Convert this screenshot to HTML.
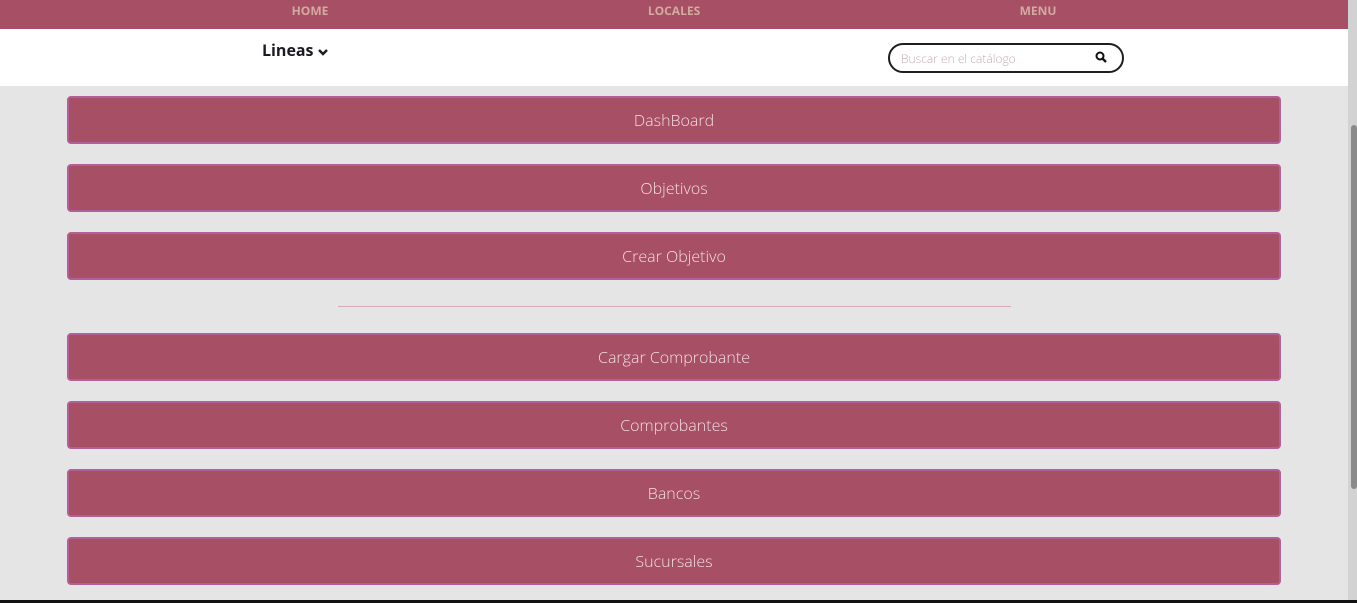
<!DOCTYPE html>
<html><head><meta charset="utf-8"><style>
html,body{margin:0;padding:0;}
body{width:1357px;height:603px;overflow:hidden;background:#e6e5e5;font-family:"Open Sans","Liberation Sans",sans-serif;position:relative;}
.top{position:absolute;left:0;top:0;width:1348px;height:29px;background:#a64f65;}
.top span{position:absolute;top:2px;font-size:12px;font-weight:bold;color:#d3aaa2;transform:translateX(-50%);}
.hdr{position:absolute;left:0;top:29px;width:1348px;height:57px;background:#fff;}
.lin{position:absolute;left:262px;top:10px;font-size:16px;font-weight:bold;color:#1b1b24;}
.search{position:absolute;left:888px;top:14px;border:2px solid #1e1e1e;border-radius:15px;box-sizing:border-box;width:236px;height:30px;}
.search span{position:absolute;left:11px;top:5px;font-size:12px;font-weight:300;color:#c6aab0;}
.search svg{position:absolute;left:205px;top:6px;}
.btn{position:absolute;left:67px;width:1214px;height:48px;box-sizing:border-box;background:#a64f65;border:2px solid #b2609a;border-radius:4px;color:#f3dde3;font-size:16px;font-weight:300;text-align:center;line-height:44px;}
.hr{position:absolute;left:338px;top:306px;width:673px;height:1px;background:#d8a8b8;}
.sb{position:absolute;left:1348px;top:0;width:9px;height:600px;background:#d2d2d2;}
.th{position:absolute;left:1351px;top:125px;width:6px;height:364px;background:#8a8a8a;border-radius:3px;}
.bot{position:absolute;left:0;top:600px;width:1357px;height:3px;background:#111;}
</style></head><body>
<div class="top"><span style="left:310px">HOME</span><span style="left:674px">LOCALES</span><span style="left:1038px">MENU</span></div>
<div class="hdr"><div class="lin">Lineas <svg width="10" height="8" viewBox="0 0 10 8"><path d="M1 2 L5 6 L9 2" stroke="#1b1b24" stroke-width="2.4" fill="none"/></svg></div>
<div class="search"><span>Buscar en el catálogo</span><svg width="12" height="12" viewBox="0 0 12 12"><circle cx="5" cy="5" r="3.5" stroke="#111" stroke-width="2" fill="none"/><path d="M7.5 7.5 L11 11" stroke="#111" stroke-width="2.4"/></svg></div></div>
<div class="btn" style="top:96px">DashBoard</div>
<div class="btn" style="top:164px">Objetivos</div>
<div class="btn" style="top:232px">Crear Objetivo</div>
<div class="hr"></div>
<div class="btn" style="top:333px">Cargar Comprobante</div>
<div class="btn" style="top:401px">Comprobantes</div>
<div class="btn" style="top:469px">Bancos</div>
<div class="btn" style="top:537px">Sucursales</div>
<div class="sb"></div><div class="th"></div>
<div class="bot"></div>
</body></html>
